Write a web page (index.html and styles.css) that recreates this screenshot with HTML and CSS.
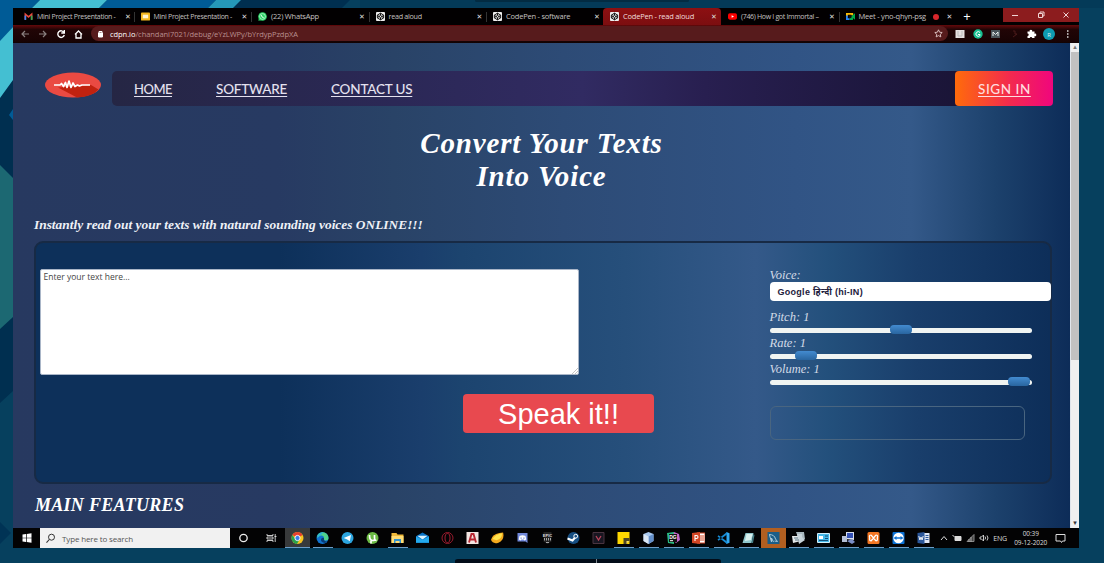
FILE: index.html
```html
<!DOCTYPE html>
<html lang="en">
<head>
<meta charset="utf-8">
<title>Read aloud</title>
<link rel="stylesheet" href="styles.css">
</head>
<body>
<svg class="wallpaper" width="1104" height="563" viewBox="0 0 1104 563" aria-hidden="true">
  <rect width="1104" height="563" fill="#06405e"/>
  <path d="M360 0h744v8H360z" fill="#043a58"/>
  <path d="M0 0h241l-8 8H13v395H0z" fill="#002f50"/>
  <path d="M240 0h110l-8 8H232z" fill="#002f50"/>
  <path d="M0 0h40L13 27 0 42zM107 0h109l-8 8H99z" fill="#005b96"/>
  <path d="M40 0h67l-8 8H32zM13 27v53L0 98V41z" fill="#44bfd2"/>
  <path d="M216 0h25l-8 8h-25z" fill="#2598b8"/>
  <path d="M13 109v11l-4-5z" fill="#005b96"/>
  <path d="M0 165l13 13v139L0 329z" fill="#1c6872"/>
  <path d="M13 391v20H0v-8z" fill="#06405e"/>
  <path d="M0 522l11 11-11 11z" fill="#003355"/>
  <path d="M475 0h214v1q0 1-2 1H477q-2 0-2-1z" fill="#032b42"/>
  <path d="M455 563v-2q0-2 3-2h260q3 0 3 2v2z" fill="#020c18"/>
  <path d="M596.500 559v4" stroke="#7e8790"/>
</svg>

<svg width="0" height="0" class="defs" aria-hidden="true">
  <symbol id="pen" viewBox="0 0 10 10"><rect width="10" height="10" rx="1" fill="#eee"/><path d="M5 1.300 8.500 3.500v3L5 8.700 1.500 6.500v-3zM5 1.300v2.400L8.500 6.500M5 8.700V6.300L1.500 3.500M5 3.700 1.500 6.500M5 6.300l3.500-2.800" fill="none" stroke="#111" stroke-width="1.100"/></symbol>
  <symbol id="gmail" viewBox="0 0 10 10"><path d="M1.500 8.500v-6L5 5.500l3.500-3v6" fill="none" stroke="#e8473c" stroke-width="1.800"/><path d="M1.500 8.800V4" stroke="#4285f4" stroke-width="1.800"/><path d="M8.500 8.800V4" stroke="#34a853" stroke-width="1.800"/></symbol>
  <symbol id="slides" viewBox="0 0 10 10"><rect y=".5" width="10" height="9" rx="1" fill="#f3b61c"/><path d="M2 3h6v4H2z" fill="#fff4cf"/></symbol>
  <symbol id="whatsapp" viewBox="0 0 10 10"><circle cx="5" cy="5" r="4.800" fill="#2bd366"/><path d="M.4 9.700 1 6.500l2.500 2.700z" fill="#2bd366"/><circle cx="5" cy="5" r="3.200" fill="none" stroke="#d9ffe6" stroke-width=".7"/><path d="M3.700 3.500q.2 2.500 2.700 3" stroke="#fff" fill="none"/></symbol>
  <symbol id="youtube" viewBox="0 0 10 10"><rect y="1.500" width="10" height="7" rx="2" fill="#f00"/><path d="M4 3.500 6.700 5 4 6.500z" fill="#fff"/></symbol>
  <symbol id="meet" viewBox="0 0 10 10"><path d="M1 5V2h6v2" fill="none" stroke="#fbbc04" stroke-width="2"/><path d="M1 4v4h3" fill="none" stroke="#2684fc" stroke-width="2"/><path d="M4 8h3V4M7 5l3-2.500v5z" fill="#00ac47" stroke="#00ac47" stroke-width="1.500"/><path d="M3 3.500h3v3H3z" fill="#111"/></symbol>
</svg>

<div class="screen">
  <header class="tabs">
    <div class="tab"><svg class="fav"><use href="#gmail"/></svg><span class="tab-title">Mini Project Presentation -</span><i class="close">✕</i></div>
    <div class="tab"><svg class="fav"><use href="#slides"/></svg><span class="tab-title">Mini Project Presentation -</span><i class="close">✕</i></div>
    <div class="tab"><svg class="fav"><use href="#whatsapp"/></svg><span class="tab-title">(22) WhatsApp</span><i class="close">✕</i></div>
    <div class="tab"><svg class="fav"><use href="#pen"/></svg><span class="tab-title wide-title">read aloud</span><i class="close">✕</i></div>
    <div class="tab last"><svg class="fav"><use href="#pen"/></svg><span class="tab-title">CodePen - software</span><i class="close">✕</i></div>
    <div class="tab active"><svg class="fav"><use href="#pen"/></svg><span class="tab-title">CodePen - read aloud</span><i class="close">✕</i></div>
    <div class="tab"><svg class="fav"><use href="#youtube"/></svg><span class="tab-title tight">(746) How I got Immortal –</span><i class="close">✕</i></div>
    <div class="tab last"><svg class="fav"><use href="#meet"/></svg><span class="tab-title meet">Meet - yno-qhyn-psg</span><b class="rec"></b><i class="close">✕</i></div>
    <div class="newtab">+</div>
    <svg class="winbtns" width="76" height="14" viewBox="0 0 76 14"><g fill="none" stroke="#f0d4d4"><path d="M9 7.500h6"/><path d="M35.500 5.500h4v4h-4zM37 5.500V4h4v4h-1.500"/><path d="M60.500 4.500l5 5m0-5l-5 5"/></g></svg>
  </header>
  <div class="toolbar">
    <svg class="navicons" width="78" height="18" viewBox="0 0 78 18"><g fill="none" stroke-width="1.200"><path d="M16 9H9m3-3L9 9l3 3M26 9h7m-3-3 3 3-3 3" stroke="#8a8080"/><path d="M51 7.500a3.300 3.300 0 1 0 .3 2.500M51.300 5v3h-3" stroke="#fff" stroke-width="1.400"/><path d="M62 9.500 65.500 6 69 9.500M63 9v4h5V9" stroke="#fff" stroke-width="1.300"/></g></svg>
    <div class="address">
      <svg width="7" height="8" viewBox="0 0 7 8"><path d="M1.500 3h4v4h-4z" fill="#fff" stroke="#fff"/><path d="M2 3V1.500h3V3" fill="none" stroke="#fff"/></svg>
      <span class="url"><b>cdpn.io</b>/chandani7021/debug/eYzLWPy/bYrdypPzdpXA</span>
      <svg class="star" width="9" height="9" viewBox="0 0 9 9"><path d="M4.500.8l1.100 2.400 2.600.3-1.900 1.800.5 2.600-2.300-1.300-2.300 1.300.5-2.600L.8 3.500l2.600-.3z" fill="none" stroke="#e3cccc" stroke-width=".9"/></svg>
    </div>
    <svg class="exts" width="131" height="18" viewBox="0 0 131 18">
      <rect x="7.500" y="5" width="9" height="8" fill="#e5e0e0"/><path d="M10 6v5h4M14 6v5" stroke="#bbb" fill="none"/>
      <circle cx="30" cy="9" r="4.700" fill="#18bf91"/><path d="M32 7.500a2.300 2.300 0 1 0 0 3V9.500h-2" fill="none" stroke="#fff"/>
      <rect x="43" y="5" width="9" height="8" fill="#4a555b"/><path d="M45 11V7l2.500 2.500L50 7v4" fill="none" stroke="#e7eeee"/>
      <path d="M65 6h2v3h2l-4 3" stroke="#4b1a1a" fill="none"/>
      <path d="M79.500 6.500h2.200a1.300 1.300 0 1 1 2.400 0h2.400v2.200a1.300 1.300 0 1 1 0 2.400v2h-2.300a1.200 1.200 0 0 0-2.400 0h-2.300v-2.200a1.200 1.200 0 0 0 0-2.400z" fill="#fff"/>
      <circle cx="101" cy="9" r="6" fill="#0e9bb0"/><text x="101" y="11.500" text-anchor="middle" class="avatar">R</text>
      <path d="M119 5.300h1.500v1.500H119zM119 8.300h1.500v1.500H119zM119 11.300h1.500v1.500H119z" fill="#ddd"/>
    </svg>
  </div>

  <div class="viewport">
    <main class="page">
      <div class="top">
        <svg class="logo" width="58" height="26" viewBox="0 0 58 26"><ellipse cx="29" cy="13" rx="28" ry="12.500" fill="#ea4a42"/><path d="M14 15.500 47 13l7.500 4.500Q49 24.500 33 25.500z" fill="#c1220f"/><path d="M10 13h6l1.500-1.500 2 3 2-4 1.500 5 2-6.500 2 6.500 2-4.500 2 3.500 2.500-1.500 2 1 2.500-1h8" fill="none" stroke="#fff" stroke-width="1.700" stroke-linejoin="round"/></svg>
        <nav class="nav">
          <a class="home">HOME</a><a class="software">SOFTWARE</a><a class="contact">CONTACT US</a>
          <a class="signin"><span>SIGN IN</span></a>
        </nav>
      </div>
      <h1>Convert Your Texts<br>Into Voice</h1>
      <p class="tagline">Instantly read out your texts with natural sounding voices ONLINE!!!</p>
      <section class="panel">
        <div class="writer">
          <div class="textbox">Enter your text here...<svg class="grip" width="6" height="6" viewBox="0 0 6 6"><path d="M0 6 6 0M3 6l3-3" stroke="#aaa" stroke-width=".7"/></svg></div>
          <div class="speak">Speak it!!</div>
        </div>
        <div class="controls">
          <label>Voice:</label>
          <div class="select">Google हिन्दी (hi-IN)</div>
          <label>Pitch: 1</label>
          <div class="track"><span class="thumb" style="margin-left:120px"></span></div>
          <label>Rate: 1</label>
          <div class="track"><span class="thumb" style="margin-left:25px"></span></div>
          <label>Volume: 1</label>
          <div class="track"><span class="thumb" style="margin-left:238px"></span></div>
          <div class="outbox"></div>
        </div>
      </section>
      <h2>MAIN FEATURES</h2>
    </main>
    <div class="scrollbar"><span class="arrow">▴</span><span class="bar"></span><span class="arrow down">▾</span></div>
  </div>

  <footer class="taskbar">
    <div class="start"><svg width="10" height="10" viewBox="0 0 10 10"><path d="M.5 1.500 4 1v3.700H.5zM4.700.9 9.500.3v4.400H4.700zM.5 5.300H4V9L.5 8.500zM4.700 5.300h4.800v4.400l-4.800-.6z" fill="#fff"/></svg></div>
    <div class="search"><svg width="11" height="11" viewBox="0 0 11 11"><circle cx="6.500" cy="4.200" r="3" fill="none" stroke="#333"/><path d="M4.300 6.500 1.500 9.700" stroke="#333" stroke-width="1.100"/></svg><span>Type here to search</span></div>
    <div class="slot wide"><svg viewBox="0 0 12 12"><circle cx="6" cy="6" r="3.700" fill="none" stroke="#eee" stroke-width="1.300"/></svg></div>
    <div class="slot wide"><svg viewBox="0 0 12 12"><path d="M1.500 2v1.500h6V2M1.500 10V8.500h6V10M1.500 5h6v2h-6zM9.700 2v8M9 4.500h2" fill="none" stroke="#ddd" stroke-width=".9"/></svg></div>
    <div class="slot run lit"><svg viewBox="0 0 12 12"><circle cx="6" cy="6" r="6" fill="#f7c51e"/><path d="M6 6 .8 3A6 6 0 0 1 11.200 3z" fill="#e5402f"/><path d="M.8 3A6 6 0 0 0 5.500 12L8 7.500 4 7z" fill="#2ba24c"/><circle cx="6" cy="6" r="2.600" fill="#3b7de9" stroke="#fff" stroke-width=".9"/></svg></div>
    <div class="slot run"><svg viewBox="0 0 12 12"><circle cx="6" cy="6" r="6" fill="#1173cf"/><path d="M1 3a6 6 0 0 1 11 3q0 2.500-3 2.500-1.500 0-1.500-1Q8 3 4 3.500 2 4 1 6z" fill="#4fd28b"/><path d="M1 3.500Q4 0 7 .3L4 3.500Q2 4 1 6z" fill="#2cb6d9"/><path d="M7.500 6Q5 5 4.500 7.500t4 3.500L11 9.500Q7 10 7.500 6z" fill="#083c78"/></svg></div>
    <div class="slot"><svg viewBox="0 0 12 12"><circle cx="6" cy="6" r="6" fill="#2ca5df"/><path d="M2.200 6 9.500 3 8.300 9.200 5.700 7.500z" fill="#fff"/></svg></div>
    <div class="slot"><svg viewBox="0 0 12 12"><circle cx="6" cy="6" r="6" fill="#6cbb45"/><path d="M3 3q0 5.500 3 5.500T8 6V3M8 7q.5 1.500 2 1.500M4.500 9v2.500" fill="none" stroke="#fff" stroke-width="1.700"/></svg></div>
    <div class="slot run"><svg viewBox="0 0 12 12"><path d="M0 1h5l1 1.500h6V11H0z" fill="#f0b93a"/><path d="M0 4h12v7H0z" fill="#ffdc75"/><path d="M2.500 7h7v4H8V9H4v2H2.500z" fill="#2e91d0"/></svg></div>
    <div class="slot"><svg viewBox="0 0 14 12"><path d="M0 4 7 0l7 4v7H0z" fill="#0872c5"/><path d="M1.500 3.500h11L7 7.500z" fill="#ddf4ff"/><path d="M0 4.500 7 8l7-3.500V11H0z" fill="#24a9ec"/></svg></div>
    <div class="slot"><svg viewBox="0 0 12 12"><circle cx="6" cy="6" r="5.500" fill="none" stroke="#971b2d"/><ellipse cx="6" cy="6" rx="2.500" ry="4.500" fill="none" stroke="#a51d31"/></svg></div>
    <div class="slot"><svg viewBox="0 0 12 12"><path d="M0 0h12v12H0z" fill="#f2e5e2"/><path d="M2.500 10.500 5 2h2l2.500 8.500M3.500 7.500h5" fill="none" stroke="#b82732" stroke-width="1.900"/></svg></div>
    <div class="slot"><svg viewBox="0 0 14 12"><path d="M0 8Q1 2 9 .5L13 0q2 8-5 11-6 2-8-3z" fill="#f3a91d"/><path d="M1.500 7Q5 2 12 1q0 6-6 7.500z" fill="#ffe34d"/></svg></div>
    <div class="slot"><svg viewBox="0 0 12 12"><path d="M1 1h10v10l-2-1.500H1z" fill="#7289da"/><path d="M3 4q3-1.500 6 0l.8 3.500-2 1-.6-1H4.800l-.6 1-2-1z" fill="#fff"/><path d="M4 5.500h1.200v1.200H4zM6.800 5.500H8v1.200H6.800z" fill="#7289da"/></svg></div>
    <div class="slot"><svg viewBox="0 0 12 12"><path d="M2 0h8v9.500L6 12 2 9.500z" fill="#222"/><text x="6" y="5" text-anchor="middle" class="epic">EPIC</text><path d="M3 6v2.500M5 6v2.500M7 6v2.500M9 6v2.500M4.500 10.500h3" stroke="#ddd" stroke-width=".7"/></svg></div>
    <div class="slot"><svg viewBox="0 0 12 12"><circle cx="6" cy="6" r="6" fill="#174f83"/><path d="M0 6.500 5 8.500 8 5" fill="none" stroke="#fff" stroke-width="2"/><circle cx="8.200" cy="4.200" r="1.900" fill="#174f83" stroke="#fff"/></svg></div>
    <div class="slot"><svg viewBox="0 0 12 12"><path d="M.5.500h11v11H.5z" fill="#181621" stroke="#4a3440"/><path d="M3.500 4 6 8l2.500-4" fill="none" stroke="#b9435a" stroke-width="1.300"/></svg></div>
    <div class="slot run"><svg viewBox="0 0 12 12"><path d="M0 0h12v12H0z" fill="#ffd800"/><path d="M6 6h6v3l-3 3H6z" fill="#4c4525"/><path d="M12 9l-3 3V9z" fill="#ffe65c"/></svg></div>
    <div class="slot run"><svg viewBox="0 0 12 12"><path d="M6 0l5 2v7l-5 3-5-3V2z" fill="#a8c8ef"/><path d="M6 4.500 11 2v7l-5 3z" fill="#648fc9"/><path d="M1 2l5 2.500V12L1 9z" fill="#dbe7f5"/></svg></div>
    <div class="slot run"><svg viewBox="0 0 13 12"><path d="M0 1 7 0v12L1 11z" fill="#2aba82"/><path d="M7 0l5 2 1 6-4 3-3-3z" fill="#c368c9"/><path d="M2 2h8v8H2z" fill="#111"/><text x="6" y="6.500" text-anchor="middle" class="dg">DG</text><path d="M3 8.700h3" stroke="#fff"/></svg></div>
    <div class="slot run"><svg viewBox="0 0 13 12"><path d="M5 1h8v10H5z" fill="#fff" stroke="#d24625"/><path d="M8 4h4M8 6h4M8 8h4" stroke="#d24625"/><path d="M0 1 8 0v12L0 11z" fill="#d24625"/><path d="M3 9V3.500h1.500q1.500 0 1.500 1.400T4.500 6.500H3" fill="none" stroke="#fff" stroke-width="1.100"/></svg></div>
    <div class="slot run"><svg viewBox="0 0 12 12"><path d="M9 0l3 1.200v9.600L9 12z" fill="#31a8ef"/><path d="M1 3.200 9.500 9.500V12L0 4.500zM1 8.800 9.500 2.500V0L0 7.500z" fill="#168bd5"/></svg></div>
    <div class="slot run"><svg viewBox="0 0 12 12"><path d="M3 1h8L9 11H0z" fill="#8fc6cb"/><path d="M4 2h6L8.500 8l-6 1z" fill="#d9f0ee"/><path d="M9 11l2-9 1 1-1.500 8z" fill="#447e88"/></svg></div>
    <div class="slot run orange"><svg viewBox="0 0 12 12"><path d="M0 0h12v12H0z" fill="#1b5e87"/><path d="M1.500 2.500Q7 2.500 8 7l2 2.500-3-.5M2 3l2 7V6l2 4" fill="none" stroke="#a9c9d8"/></svg></div>
    <div class="slot run"><svg viewBox="0 0 13 12"><path d="M4 0h8l1 7-6 1z" fill="#a9b8bf"/><path d="M0 4h7l2 5-8 2z" fill="#e5e9ea"/><path d="M5 2h5v3l3 3-6 4z" fill="#c8d4da"/><path d="M2 6h4M3 8h4" stroke="#587483"/></svg></div>
    <div class="slot run"><svg viewBox="0 0 13 12"><path d="M.5 1.500h12v9H.5z" fill="#45b8e8" stroke="#d4effa"/><path d="M2 4h4v3H2z" fill="#fff"/><path d="M8 4h3M8 6.500h3M2 8.500h9" stroke="#134e76"/></svg></div>
    <div class="slot run"><svg viewBox="0 0 13 12"><path d="M4 0h8v8L4 7z" fill="#d8dfee"/><path d="M5 1h6v5H5z" fill="#3250b5"/><path d="M0 4h5v6H0z" fill="#b4bfd6"/><path d="M5 9l5-2 3 3-3 2z" fill="#7a8ec8"/></svg></div>
    <div class="slot run"><svg viewBox="0 0 12 12"><rect width="12" height="12" rx="1.500" fill="#f37623"/><path d="M3.500 3 8.500 9M8.500 3l-5 6M3.500 3Q1.500 3 2 5t0 2q0 2 1.500 2M8.500 3q2 0 1.500 2t0 2q0 2-1.500 2" fill="none" stroke="#fff" stroke-width="1.200"/></svg></div>
    <div class="slot run"><svg viewBox="0 0 12 12"><rect width="12" height="12" rx="1" fill="#0c72d5"/><circle cx="6" cy="6" r="5.200" fill="#fff"/><path d="M1 6l3-2v1.300h4V4l3 2-3 2V6.700H4V8z" fill="#0c72d5"/></svg></div>
    <div class="slot run"><svg viewBox="0 0 12 12"><path d="M5 1h7v10H5z" fill="#dfe7f5"/><path d="M8 3.500h3M8 5.500h3M8 7.500h3" stroke="#2b579a"/><path d="M0 1 7 0v12L0 11z" fill="#2b579a"/><path d="M1.300 4 2.400 8 3.500 5l1.100 3L5.700 4" fill="none" stroke="#fff" stroke-width=".9"/></svg></div>
    <div class="tray">
      <svg width="54" height="12" viewBox="0 0 54 12"><g fill="none" stroke="#ddd"><path d="M2 8l3-3.500L8 8"/><path d="M16 4.500h6v4h-6z" fill="#ddd"/><path d="M13.500 3l2 2"/><path d="M28 9.500h7v-7z" fill="#444" stroke="#888"/><path d="M30 10V7m2 3V5" stroke="#aaa"/><path d="M41 5h1.500l2-2v6l-2-2H41zM46 4.500q1.200 1.500 0 3M48 3.500q2 2.500 0 5" stroke-width=".9"/></g></svg>
      <span class="lang">ENG</span>
      <span class="clock">00:39<br>09-12-2020</span>
      <svg width="11" height="11" viewBox="0 0 11 11"><path d="M1 1.500h9v6.500H7.500L6.500 9.500 5.500 8H1z" fill="none" stroke="#ddd"/></svg>
    </div>
  </footer>
</div>
</body>
</html>
```
FILE: styles.css
```css
* { box-sizing: border-box; }
body { margin: 0; width: 1104px; height: 563px; overflow: hidden; padding: 8px 0 0 13px; font-family: "Open Sans", sans-serif; }
.wallpaper { position: absolute; left: 0; top: 0; z-index: -1; }
.defs { position: absolute; }
.screen { width: 1066px; height: 540px; display: flex; flex-direction: column; overflow: hidden; }

/* Browser chrome */
.tabs { height: 17px; display: flex; background: #020001; color: #c4c0c0; flex: none; }
.tab { width: 117.500px; flex: none; display: flex; align-items: center; padding: 0 3px 0 11px; height: 17px; position: relative; }
.tab + .tab { padding-left: 10px; }
.tab::after { content: ""; position: absolute; right: -4px; top: 4px; width: 1px; height: 10px; background: #333; }
.tab.active::after, .tab.last::after { display: none; }
.tab.last:nth-child(8)::before { content: none; }
.tab.active { background: linear-gradient(#8d1012, #7c0e10); border-radius: 4px 4px 0 0; color: #f2dcdc; margin-left: 2.500px; padding-left: 7px; width: 118px; }
.tab.active + .tab { margin-left: -3px; }
.fav { width: 9px; height: 9px; flex: none; margin-right: 4px; }
.tab-title { flex: none; width: 79px; font-size: 7px; line-height: 17px; white-space: nowrap; letter-spacing: -.29px; }
.tab:nth-child(n+3) .tab-title { font-size: 7.500px; letter-spacing: -.22px; }
.tab:nth-child(n) .wide-title { letter-spacing: -.28px; font-size: 7.200px; }
.tab:nth-child(n) .tight { font-size: 7px; letter-spacing: -.33px; }
.close { font: normal 7px "DejaVu Sans", sans-serif; margin-left: 9px; color: #ddd; }
.tab-title.meet { width: 74px; }
.rec { width: 6px; height: 6px; border-radius: 50%; background: #d8262b; flex: none; }
.rec + .close { margin-left: 8px; }
.newtab { width: 14px; margin-left: 7px; color: #fff; font-size: 13px; line-height: 16px; text-align: center; }
.winbtns { margin-left: auto; background: #8c1c1e; flex: none; }
.toolbar { height: 18px; flex: none; display: flex; background: linear-gradient(#65090b, #210506 25%, #180304 90%, #100202); }
.navicons { flex: none; }
.address { width: 857px; height: 15px; margin-top: 1px; background: #571b1c; border-radius: 8px; display: flex; align-items: center; padding: 0 5px 0 6px; flex: none; }
.url { margin-left: 6px; font-size: 7.500px; line-height: 14px; color: #b98f8f; letter-spacing: -.05px; }
.url b { color: #fff; font-weight: 400; }
.star { margin-left: auto; }
.avatar { font: 6px "Open Sans", sans-serif; fill: #d8f2f5; }

/* Web page */
.viewport { flex: 1; display: flex; min-height: 0; }
.page { width: 1057px; padding-left: 21px; background: linear-gradient(90deg, #273960 0, #273a62 25%, #294367 36%, #2d4b76 52%, #315485 74%, #345989 85%, #1c416c 93%, #0d2c58 100%); color: #fff; overflow: hidden; }
.top { display: flex; padding: 28px 0 0 10px; height: 63px; }
.logo { margin: 1px 10px 0 0; flex: none; }
.nav { width: 941px; height: 35px; border-radius: 5px; background: linear-gradient(90deg, #252644 0, #2b2856 30%, #312b62 50%, #281f50 63%, #1d173e 82%, #17122e 100%); display: flex; align-items: center; font-family: Lato, sans-serif; font-weight: 500; font-size: 13.500px; color: #e4e1ef; }
.nav a { text-decoration: underline; text-decoration-thickness: 1px; text-underline-offset: 2px; white-space: nowrap; padding-top: 1px; }
.nav .home { margin-left: 22px; width: 82px; font-size: 13px; letter-spacing: -.5px; }
.software { width: 115px; letter-spacing: -.2px; }
.contact { letter-spacing: -.2px; }
.nav .signin { margin-left: auto; width: 98px; height: 35px; padding: 1px 0 0 23px; line-height: 35px; border-radius: 4px; background: linear-gradient(90deg, #ff6b0b, #f32b4d 55%, #f0067d); color: #ffdcdf; letter-spacing: .55px; }
h1 { margin: 21px 0 0; width: 1015px; text-align: center; font: italic bold 29px/32.500px "Liberation Serif", serif; letter-spacing: .85px; }
.tagline { margin: 24px 0 0; font: italic bold 13.400px/18px "Liberation Serif", serif; color: #eef1f7; white-space: nowrap; height: 25px; }
.panel { width: 1018px; height: 243px; border: 2px solid #172a45; border-radius: 9px; display: flex; padding: 26px 0 0 4px; background: linear-gradient(90deg, #0d305a 0, #0d305a 24%, #1a3e6c 38%, #1c446f 42%, #264f7b 58%, #345989 71%, #23507c 78%, #193e6b 87%, #0d2e59 100%); }
.writer { width: 729.500px; flex: none; }
.textbox { width: 539px; height: 106px; border: 1.500px solid #aab6c8; border-radius: 2px; background: #fff; color: #454545; font-size: 8.500px; line-height: 11px; padding: 1px 2.500px; position: relative; }
.grip { position: absolute; right: 0; bottom: 0; }
.speak { width: 191px; height: 39px; margin: 19px 0 0 423px; background: #e8494f; border-radius: 4px; text-align: center; font: 29px/40px "Liberation Sans", sans-serif; }
.controls { width: 280.500px; }
.controls label { display: block; height: 13px; font: italic 12.500px/13px "Liberation Serif", serif; color: #d3dbe7; }
.select { width: 281px; height: 19px; margin-bottom: 10px; border-radius: 4px; background: #fff; color: #22203c; font: bold 9px/21px "Liberation Sans", "Noto Sans", sans-serif; padding-left: 8px; letter-spacing: .28px; }
.track { width: 262px; height: 5px; margin: 4px 0; border-radius: 3px; background: #f0f4f2; display: flex; }
.thumb { width: 22px; height: 9px; margin-top: -3px; border-radius: 4px; background: linear-gradient(#438bd0, #29659f); flex: none; }
.outbox { width: 255px; height: 34px; margin-top: 21px; border: 1px solid #496580; border-radius: 6px; }
h2 { margin: 10px 0 0 1px; font: italic bold 18px/22px "Liberation Serif", serif; letter-spacing: .28px; }
.scrollbar { width: 9px; background: #f0f0f0; display: flex; flex-direction: column; border-left: 1px solid #e0e5eb; }
.arrow { height: 9px; font: 7px/9px "DejaVu Sans", sans-serif; text-align: center; color: #777; }
.bar { height: 308px; background: #c1c1c1; }
.down { margin-top: auto; color: #333; }

/* Desktop taskbar */
.taskbar { height: 20px; flex: none; display: flex; background: #030304; }
.start { width: 27px; display: grid; place-items: center; }
.search { width: 190px; background: #f1f1f1; color: #555; display: flex; align-items: center; font-size: 8px; letter-spacing: -.14px; padding-left: 5px; }
.search span { margin-left: 6px; white-space: nowrap; }
.slot { width: 25.050px; flex: none; display: grid; place-items: center; position: relative; }
.slot.wide { width: 27.500px; }
.slot svg { width: 13px; height: 12px; }
.run::after { content: ""; position: absolute; left: 3px; right: 2px; bottom: 0; height: 1px; background: #6c9dc8; }
.lit { background: #383a3b; }
.lit::after { left: 0; right: 0; }
.orange { background: #b25f20; }
.orange::after { display: none; }
.epic { font: bold 4px "Liberation Sans", sans-serif; fill: #ddd; }
.dg { font: bold 5px "Liberation Sans", sans-serif; fill: #fff; }
.tray { display: flex; align-items: center; flex: 1; padding-left: 3px; color: #ddd; font-size: 7px; }
.lang { margin-left: 0; width: 18px; letter-spacing: -.2px; }
.clock { width: 37px; text-align: center; line-height: 9px; font-size: 6.500px; margin: 0 6px 0 1px; letter-spacing: -.1px; white-space: nowrap; }
```
